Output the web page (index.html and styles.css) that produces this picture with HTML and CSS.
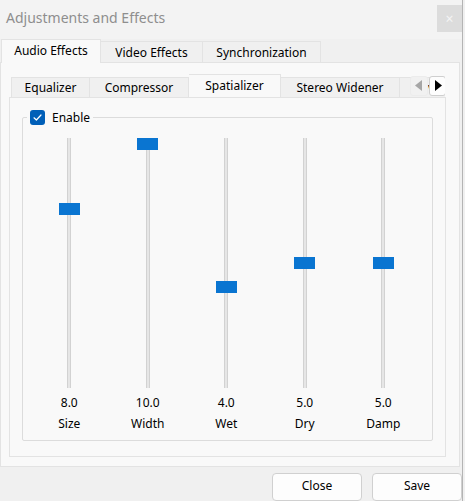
FILE: index.html
```html
<!DOCTYPE html>
<html>
<head>
<meta charset="utf-8">
<link rel="stylesheet" href="styles.css">
</head>
<body>
<div class="window">
  <div class="titlebar">
    <span class="title">Adjustments and Effects</span>
    <span class="close">×</span>
  </div>
  <div class="tabs outer-tabs">
    <div class="tab sel w-audio">Audio Effects</div>
    <div class="tab w-video">Video Effects</div>
    <div class="tab w-sync">Synchronization</div>
  </div>
  <div class="pane outer-pane">
    <div class="tabs inner-tabs">
      <div class="tab w-eq">Equalizer</div>
      <div class="tab w-comp">Compressor</div>
      <div class="tab sel w-spat">Spatializer</div>
      <div class="tab w-stereo">Stereo Widener</div>
      <div class="tab w-adv">Advanced</div>
      <div class="scroller">
        <span class="arrow left"><svg width="8" height="11" viewBox="0 0 8 11"><path d="M7 0 L0 5.5 L7 11 Z" fill="#a6a6a6"/></svg></span>
        <span class="arrow right"><svg width="8" height="11" viewBox="0 0 8 11"><path d="M1 0 L8 5.5 L1 11 Z" fill="#000"/></svg></span>
      </div>
    </div>
    <div class="pane inner-pane">
      <fieldset class="group">
        <legend class="legend">
          <span class="check"><svg width="15" height="15" viewBox="0 0 15 15"><path d="M4 7.8 L6.4 10 L11 5" fill="none" stroke="#fff" stroke-width="1.2" stroke-linecap="round" stroke-linejoin="round"/></svg></span>
          <span class="legend-text">Enable</span>
        </legend>
        <div class="sliders">
          <div class="slider">
            <div class="track"><div class="handle" style="top:65px"></div></div>
            <div class="value">8.0</div>
            <div class="label">Size</div>
          </div>
          <div class="slider">
            <div class="track"><div class="handle" style="top:0px"></div></div>
            <div class="value">10.0</div>
            <div class="label">Width</div>
          </div>
          <div class="slider">
            <div class="track"><div class="handle" style="top:143px"></div></div>
            <div class="value">4.0</div>
            <div class="label">Wet</div>
          </div>
          <div class="slider">
            <div class="track"><div class="handle" style="top:119px"></div></div>
            <div class="value">5.0</div>
            <div class="label">Dry</div>
          </div>
          <div class="slider">
            <div class="track"><div class="handle" style="top:119px"></div></div>
            <div class="value">5.0</div>
            <div class="label">Damp</div>
          </div>
        </div>
      </fieldset>
    </div>
  </div>
  <div class="buttons">
    <button class="btn">Close</button>
    <button class="btn">Save</button>
  </div>
</div>
</body>
</html>
```

FILE: styles.css
```css
html, body {
  margin: 0;
  padding: 0;
}
body {
  width: 465px;
  height: 501px;
  overflow: hidden;
  background: #f0f0f0;
  font-family: "Noto Sans", "Open Sans", sans-serif;
  font-size: 12px;
  color: #000;
}
.window {
  width: 462px;
  height: 501px;
  border-right: 1px solid #b4b4b4;
  background: #f0f0f0;
  display: flex;
  flex-direction: column;
}
.titlebar {
  height: 39px;
  display: flex;
  justify-content: space-between;
  align-items: flex-start;
  background: #f3f3f3;
  padding-left: 6px;
}
.title {
  font-size: 14px;
  line-height: 36px;
  color: #8e8e8e;
}
.close {
  margin-top: 5px;
  width: 25px;
  height: 27px;
  background: #dcdcdc;
  color: #f4f4f4;
  font-size: 14px;
  line-height: 27px;
  text-align: center;
}
.tabs {
  display: flex;
  align-items: flex-end;
}
.tab {
  box-sizing: border-box;
  height: 21px;
  border: 1px solid #e3e3e3;
  border-bottom: none;
  background: #f0f0f0;
  text-align: center;
  line-height: 21px;
  white-space: nowrap;
  flex: none;
}
.tab + .tab {
  border-left: none;
}
.tab.sel {
  height: 24px;
  line-height: 22px;
  background: #f9f9f9;
  margin-bottom: -1px;
  position: relative;
  z-index: 1;
}
.outer-tabs {
  height: 23px;
  padding-left: 1px;
}
.w-audio { width: 100px; }
.w-video { width: 102px; }
.w-sync { width: 118px; }
.pane {
  box-sizing: border-box;
  background: #f9f9f9;
  border: 1px solid #e3e3e3;
}
.outer-pane {
  width: 460px;
  height: 409px;
  padding: 11px 0 0 8px;
}
.inner-tabs {
  width: 434px;
  height: 23px;
  padding-left: 2px;
  position: relative;
  overflow: hidden;
}
.inner-tabs .tab {
  height: 20px;
  line-height: 19px;
}
.inner-tabs .tab.sel {
  height: 24px;
  line-height: 22px;
}
.w-eq { width: 79px; }
.w-comp { width: 99px; }
.w-spat { width: 92px; }
.w-stereo { width: 119px; }
.w-adv { width: 80px; text-align: left; padding-left: 13px; }
.scroller {
  position: absolute;
  left: 401px;
  top: 2px;
  display: flex;
  gap: 1px;
  z-index: 2;
}
.arrow {
  box-sizing: border-box;
  width: 18px;
  height: 20px;
  display: flex;
  align-items: center;
  justify-content: center;
  border-radius: 3px;
}
.arrow.left {
  background: #f1f1f1;
  border: 1px solid #ececec;
}
.arrow.right {
  width: 17px;
  background: #fdfdfd;
  border: 1px solid #cfcfcf;
}
.inner-pane {
  width: 437px;
  height: 360px;
  padding: 12px 0 0 12px;
}
.group {
  box-sizing: border-box;
  width: 411px;
  height: 331px;
  margin: 0;
  padding: 0 4px;
  border: 1px solid #dcdcdc;
  border-radius: 2px;
}
.legend {
  padding: 0 3px;
  display: flex;
  align-items: center;
  gap: 7px;
  height: 16px;
}
.check {
  width: 15px;
  height: 15px;
  border-radius: 3px;
  background: #005fb8;
  display: flex;
}
.legend-text {
  line-height: 16px;
}
.sliders {
  display: grid;
  grid-template-columns: repeat(5, 78.5px);
  padding-left: 3px;
  padding-top: 12px;
}
.slider {
  display: flex;
  flex-direction: column;
  align-items: center;
}
.track {
  position: relative;
  box-sizing: border-box;
  width: 4px;
  height: 250px;
  background: #e6e6e6;
  border-left: 1px solid #d2d2d2;
  border-right: 1px solid #d2d2d2;
}
.handle {
  position: absolute;
  left: -9.5px;
  width: 21px;
  height: 12px;
  background: #0a75d1;
}
.value {
  margin-top: 7px;
  line-height: 16px;
}
.label {
  margin-top: 5px;
  line-height: 16px;
}
.buttons {
  display: flex;
  justify-content: flex-end;
  gap: 10px;
  padding-top: 6px;
}
.btn {
  box-sizing: border-box;
  width: 90px;
  height: 28px;
  background: #fdfdfd;
  border: 1px solid #d0d0d0;
  border-radius: 4px;
  font-family: "Noto Sans", "Open Sans", sans-serif;
  font-size: 12px;
  color: #000;
  padding: 0 0 3px 0;
}
```
